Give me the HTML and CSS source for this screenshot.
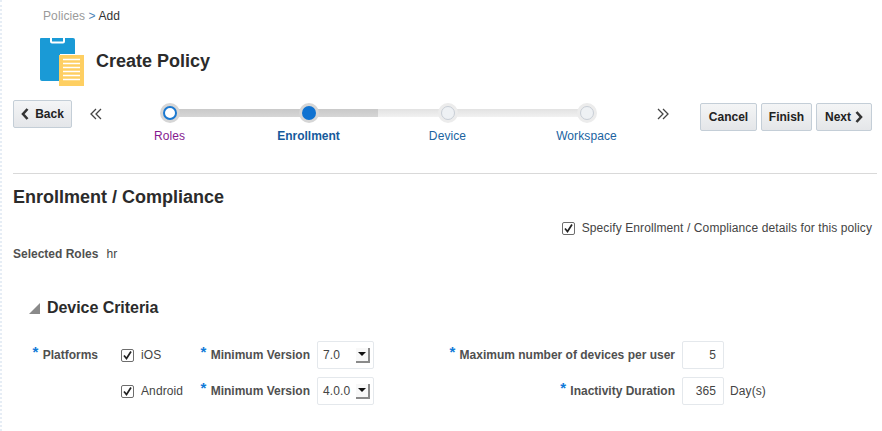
FILE: index.html

```html
<!DOCTYPE html>
<html>
<head>
  <title>Create Policy</title>
  <link rel="stylesheet" href="styles.css">
</head>
<body>
  <div class="crumbs"><span class="crumb-link">Policies</span> <span class="crumb-sep">&gt;</span> Add</div>

  <div class="page-head">
    <svg class="page-icon" width="44" height="48" viewBox="0 0 44 48">
      <path d="M1 0h9v3.500q0 2 2 2h11q2 0 2-2V0h8q2 0 2 2v14H20v27H2q-2 0-2-2V1q0-1 1-1z" fill="#1a9ad6"/>
      <path d="M12 0h11v3.500h-11z" fill="#1a9ad6"/>
      <rect x="19" y="17" width="25" height="31" fill="#fecf62"/>
      <path d="M23 21.500h17M23 25.500h17M23 29.500h17M23 33.500h17M23 37.500h17M23 41.500h17" stroke="#fff" stroke-width="1.600"/>
    </svg>
    <h1>Create Policy</h1>
  </div>

  <div class="nav-row">
    <button class="btn btn-back">
      <svg width="8" height="12" viewBox="0 0 8 12"><path d="M6.500 1L2 6l4.500 5" fill="none" stroke="#333" stroke-width="2.600"/></svg>
      Back
    </button>
    <svg class="skip skip-prev" width="12" height="12" viewBox="0 0 12 12"><path d="M6 1L1 6l5 5M11 1L6 6l5 5" fill="none" stroke="#444" stroke-width="1.300"/></svg>

    <div class="train">
      <div class="step step-first">
        <div class="node line-dark"><span class="dot dot-visited"></span></div>
        <div class="step-label visited">Roles</div>
      </div>
      <div class="step">
        <div class="node line-dark"><span class="dot dot-current"></span></div>
        <div class="step-label current">Enrollment</div>
      </div>
      <div class="step">
        <div class="node line-light"><span class="dot dot-todo"></span></div>
        <div class="step-label">Device</div>
      </div>
      <div class="step step-last">
        <div class="node line-light"><span class="dot dot-todo"></span></div>
        <div class="step-label">Workspace</div>
      </div>
    </div>

    <svg class="skip skip-next" width="12" height="12" viewBox="0 0 12 12"><path d="M1 1l5 5-5 5M6 1l5 5-5 5" fill="none" stroke="#444" stroke-width="1.300"/></svg>
    <div class="actions">
      <button class="btn btn-cancel">Cancel</button>
      <button class="btn btn-finish">Finish</button>
      <button class="btn btn-next">
        Next
        <svg width="8" height="12" viewBox="0 0 8 12"><path d="M1.500 1L6 6l-4.500 5" fill="none" stroke="#333" stroke-width="2.600"/></svg>
      </button>
    </div>
  </div>

  <h2>Enrollment / Compliance</h2>

  <div class="specify">
    <span class="check"><svg width="13" height="13" viewBox="0 0 13 13"><path d="M3 6.500l2.500 3L10 2.500" fill="none" stroke="#222" stroke-width="1.700"/></svg></span>
    Specify Enrollment / Compliance details for this policy
  </div>

  <div class="roles"><span class="label">Selected Roles</span><span>hr</span></div>

  <h3 class="section">
    <svg width="11" height="11" viewBox="0 0 11 11"><path d="M11 0v11H0z" fill="#8a8a8a"/></svg>
    Device Criteria
  </h3>

  <div class="criteria">
    <div class="label req"><i>*</i> Platforms</div>
    <div class="option">
      <span class="check"><svg width="13" height="13" viewBox="0 0 13 13"><path d="M3 6.500l2.500 3L10 2.500" fill="none" stroke="#222" stroke-width="1.700"/></svg></span>
      iOS
    </div>
    <div class="label req pad"><i>*</i> Minimum Version</div>
    <div class="select"><span>7.0</span><span class="arrow"></span></div>
    <div class="label req pad"><i>*</i> Maximum number of devices per user</div>
    <div class="number">5</div>
    <div></div>

    <div></div>
    <div class="option">
      <span class="check"><svg width="13" height="13" viewBox="0 0 13 13"><path d="M3 6.500l2.500 3L10 2.500" fill="none" stroke="#222" stroke-width="1.700"/></svg></span>
      Android
    </div>
    <div class="label req pad"><i>*</i> Minimum Version</div>
    <div class="select"><span>4.0.0</span><span class="arrow"></span></div>
    <div class="label req pad"><i>*</i> Inactivity Duration</div>
    <div class="number">365</div>
    <div class="suffix">Day(s)</div>
  </div>
</body>
</html>
```

FILE: styles.css

```css
body {
  margin: 0;
  padding: 0 10px 0 11px;
  height: 431px;
  box-sizing: border-box;
  overflow: hidden;
  background: #fff;
  border-left: 2px dotted #e6edf5;
  color: #444;
  font-family: "Liberation Sans", Arial, sans-serif;
  font-size: 12px;
  letter-spacing: 0.1px;
}
.crumbs {
  margin: 9px 0 0 30px;
  line-height: 14px;
  color: #333;
}
.crumb-link {
  color: #9a9a9a;
}
.crumb-sep {
  color: #4a86b8;
}
.page-head {
  display: flex;
  align-items: center;
  margin: 15px 0 0 27px;
  height: 48px;
}
.page-head h1 {
  margin: 0 0 2px 12px;
  font-size: 18px;
  font-weight: bold;
  letter-spacing: 0;
  color: #2b2b2b;
}
.nav-row {
  display: flex;
  align-items: flex-start;
  margin: 14px -5px 0 0;
  height: 73px;
  border-bottom: 1px solid #d9d9d9;
}
.btn {
  display: flex;
  align-items: center;
  justify-content: center;
  gap: 4px;
  height: 28px;
  padding: 0;
  box-sizing: border-box;
  border: 1px solid #c4ced7;
  border-radius: 2px;
  background: linear-gradient(#f4f5f6, #e4e6e9);
  color: #222;
  font-family: inherit;
  font-size: 12px;
  font-weight: bold;
}
.btn-back {
  gap: 6px;
  width: 59px;
}
.btn-cancel {
  width: 57px;
}
.btn-finish {
  width: 51px;
}
.btn-next {
  width: 56px;
}
.skip {
  flex: none;
  margin-top: 8px;
}
.skip-prev {
  margin-left: 18px;
}
.skip-next {
  margin-left: 1px;
}
.train {
  display: flex;
  flex: none;
  width: 556px;
  margin-left: -2px;
}
.step {
  width: 139px;
  text-align: center;
}
.node {
  display: flex;
  align-items: center;
  justify-content: center;
  height: 26px;
  background-repeat: no-repeat;
  background-position: center;
  background-size: 100% 8px;
}
.line-dark {
  background-image: linear-gradient(#c9c9c9, #d6d6d6);
}
.line-light {
  background-image: linear-gradient(#e2e2e2, #f1f1f1);
}
.step-first .node {
  background-position: right center;
  background-size: 50% 8px;
}
.step-last .node {
  background-position: left center;
  background-size: 50% 8px;
}
.dot {
  display: block;
  width: 14px;
  height: 14px;
  box-sizing: border-box;
  border-radius: 50%;
  box-shadow: 0 0 0 3px #d6d6d6;
}
.dot-visited {
  background: #fff;
  border: 2px solid #1a78d0;
}
.dot-current {
  background: #0f72d1;
}
.dot-todo {
  background: #eef1f4;
  border: 1px solid #c8ced6;
  box-shadow: 0 0 0 3px #ececec;
}
.step-label {
  margin-top: 3px;
  line-height: 14px;
  color: #20639f;
}
.step-label.visited {
  color: #851a8f;
}
.step-label.current {
  color: #165a9c;
  font-weight: bold;
  letter-spacing: 0;
}
.actions {
  display: flex;
  gap: 4px;
  margin: 3px 0 0 31px;
}
h2 {
  margin: 13px 0 0;
  font-size: 18px;
  line-height: 21px;
  font-weight: bold;
  letter-spacing: 0;
  color: #2b2b2b;
}
.specify {
  display: flex;
  align-items: center;
  justify-content: flex-end;
  gap: 7px;
  margin: 12px 0 0;
  height: 16px;
}
.check {
  display: inline-flex;
  flex: none;
  width: 13px;
  height: 13px;
  box-sizing: border-box;
  align-items: center;
  justify-content: center;
  border: 1px solid #6d6d6d;
  border-radius: 2px;
  background: #fff;
}
.check svg {
  flex: none;
}
.roles {
  display: flex;
  gap: 8px;
  margin-top: 11px;
  line-height: 14px;
}
.label {
  font-weight: bold;
  letter-spacing: 0;
  color: #505050;
}
.section {
  display: flex;
  align-items: center;
  gap: 7px;
  margin: 38px 0 0 16px;
  font-size: 16px;
  line-height: 18px;
  font-weight: bold;
  letter-spacing: -0.05px;
  color: #2b2b2b;
}
.criteria {
  display: grid;
  grid-template-columns: 85px 86px 133px 57px 308px 42px auto;
  grid-auto-rows: 28px;
  row-gap: 8px;
  align-items: center;
  margin-top: 24px;
}
.req {
  text-align: right;
}
.pad {
  padding-right: 7px;
}
.req i {
  position: relative;
  top: -2px;
  margin-right: 1px;
  font-style: normal;
  font-size: 15px;
  line-height: 10px;
  color: #0f7ad8;
}
.option {
  display: flex;
  align-items: center;
  gap: 7px;
  padding-left: 23px;
  white-space: nowrap;
}
.select {
  display: flex;
  align-items: center;
  justify-content: space-between;
  height: 28px;
  box-sizing: border-box;
  padding: 0 3px 0 5px;
  border: 1px solid #e4e8ec;
  border-radius: 2px;
}
.arrow {
  display: flex;
  align-items: center;
  justify-content: center;
  width: 14px;
  height: 15px;
  box-sizing: border-box;
  border-right: 2px solid #8a8a8a;
  border-bottom: 2px solid #8a8a8a;
  background: #f8f8f8;
}
.arrow::after {
  content: "";
  border-left: 4px solid transparent;
  border-right: 4px solid transparent;
  border-top: 4px solid #111;
}
.number {
  height: 28px;
  box-sizing: border-box;
  padding-right: 7px;
  border: 1px solid #e4e8ec;
  border-radius: 2px;
  line-height: 26px;
  text-align: right;
}
.suffix {
  padding-left: 6px;
}
```
